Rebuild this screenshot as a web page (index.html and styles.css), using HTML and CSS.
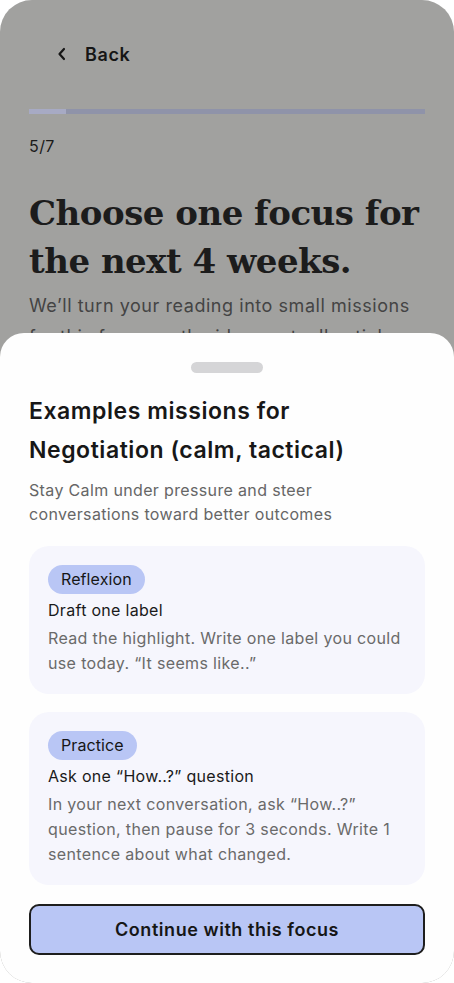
FILE: index.html
```html
<!DOCTYPE html>
<html lang="en">
<head>
<meta charset="utf-8">
<title>Choose focus</title>
<link rel="stylesheet" href="styles.css">
</head>
<body>
<div class="frame">
  <div class="page">
    <div class="topbar">
      <svg class="chev" width="10" height="14" viewBox="0 0 10 14"><path d="M7 2 L2.5 7 L7 12" fill="none" stroke="#161616" stroke-width="2.2" stroke-linecap="round" stroke-linejoin="round"/></svg>
      <span class="back">Back</span>
    </div>
    <div class="progress"><div class="progress-fill"></div></div>
    <div class="step">5/7</div>
    <h1 class="headline">Choose one focus for the next 4 weeks.</h1>
    <p class="lead">We’ll turn your reading into small missions for this focus so the ideas actually stick.</p>
  </div>
  <div class="sheet">
    <div class="handle"></div>
    <h2 class="sheet-title">Examples missions for Negotiation (calm, tactical)</h2>
    <p class="sheet-desc">Stay Calm under pressure and steer conversations toward better outcomes</p>
    <div class="cards">
      <div class="card">
        <span class="tag">Reflexion</span>
        <div class="card-title">Draft one label</div>
        <p class="card-text">Read the highlight. Write one label you could use today. “It seems like..”</p>
      </div>
      <div class="card">
        <span class="tag">Practice</span>
        <div class="card-title">Ask one “How..?” question</div>
        <p class="card-text">In your next conversation, ask “How..?” question, then pause for 3 seconds. Write 1 sentence about what changed.</p>
      </div>
    </div>
    <button class="cta">Continue with this focus</button>
  </div>
</div>
</body>
</html>
```
FILE: styles.css
```css
* { box-sizing: border-box; }
html, body { margin: 0; padding: 0; background: #ffffff; }
body { font-family: Inter, "Noto Sans", sans-serif; }
.frame {
  position: relative;
  width: 454px;
  height: 983px;
  border-radius: 32px;
  overflow: hidden;
  background: #a1a19f;
}
.page { padding: 40px 29px 0 29px; }
.topbar { display: flex; align-items: center; gap: 18px; padding-left: 28px; height: 28px; }
.chev { display: block; }
.back { font-size: 18px; font-weight: 600; color: #161616; letter-spacing: 0.6px; }
.progress { margin-top: 41px; height: 5px; background: #8f93a9; }
.progress-fill { width: 37px; height: 5px; background: #a7aac4; }
.step { margin-top: 22px; font-size: 16px; color: #1a1a1a; line-height: 20px; letter-spacing: 0.4px; }
.headline {
  margin: 33px 0 0 0;
  font-family: "DejaVu Serif", serif;
  font-weight: 700;
  font-size: 34px;
  line-height: 48px;
  letter-spacing: -0.5px;
  color: #1c1c1c;
}
.lead { margin: 5px 0 0 0; font-size: 18px; line-height: 31px; color: #444444; letter-spacing: 0.55px; }
.sheet {
  position: absolute;
  left: 0; right: 0; bottom: 0;
  top: 333px;
  background: #fefefe;
  border-radius: 24px 24px 0 0;
  padding: 29px 29px 0 29px;
  display: flex;
  flex-direction: column;
}
.handle { align-self: center; width: 72px; height: 11px; border-radius: 6px; background: #d5d5d7; }
.sheet-title { margin: 19px 0 0 0; max-width: 330px; font-size: 23px; font-weight: 600; line-height: 39px; color: #171717; letter-spacing: 0.55px; }
.sheet-desc { margin: 8px 0 0 0; font-size: 16px; line-height: 24px; color: #666666; letter-spacing: 0.35px; }
.cards { margin-top: 20px; display: flex; flex-direction: column; gap: 18px; }
.card { background: #f6f6fd; border-radius: 20px; padding: 19px 19px 18px 19px; display: flex; flex-direction: column; align-items: flex-start; }
.tag { background: #b9c6f5; border-radius: 15px; height: 29px; line-height: 29px; padding: 0 13px; font-size: 16px; color: #161616; letter-spacing: 0.1px; }
.card-title { margin-top: 4px; font-size: 16px; line-height: 24px; color: #1a1a1a; letter-spacing: 0.3px; }
.card-text { margin: 4px 0 0 0; font-size: 16px; line-height: 25px; color: #6a6a6a; letter-spacing: 0.35px; }
.cta {
  margin-top: 19px;
  height: 51px;
  width: 100%;
  background: #b9c6f5;
  border: 2px solid #1e1e1e;
  border-radius: 10px;
  font-family: Inter, "Noto Sans", sans-serif;
  font-size: 18px;
  font-weight: 600;
  color: #161616;
  letter-spacing: 0.55px;
}
```
